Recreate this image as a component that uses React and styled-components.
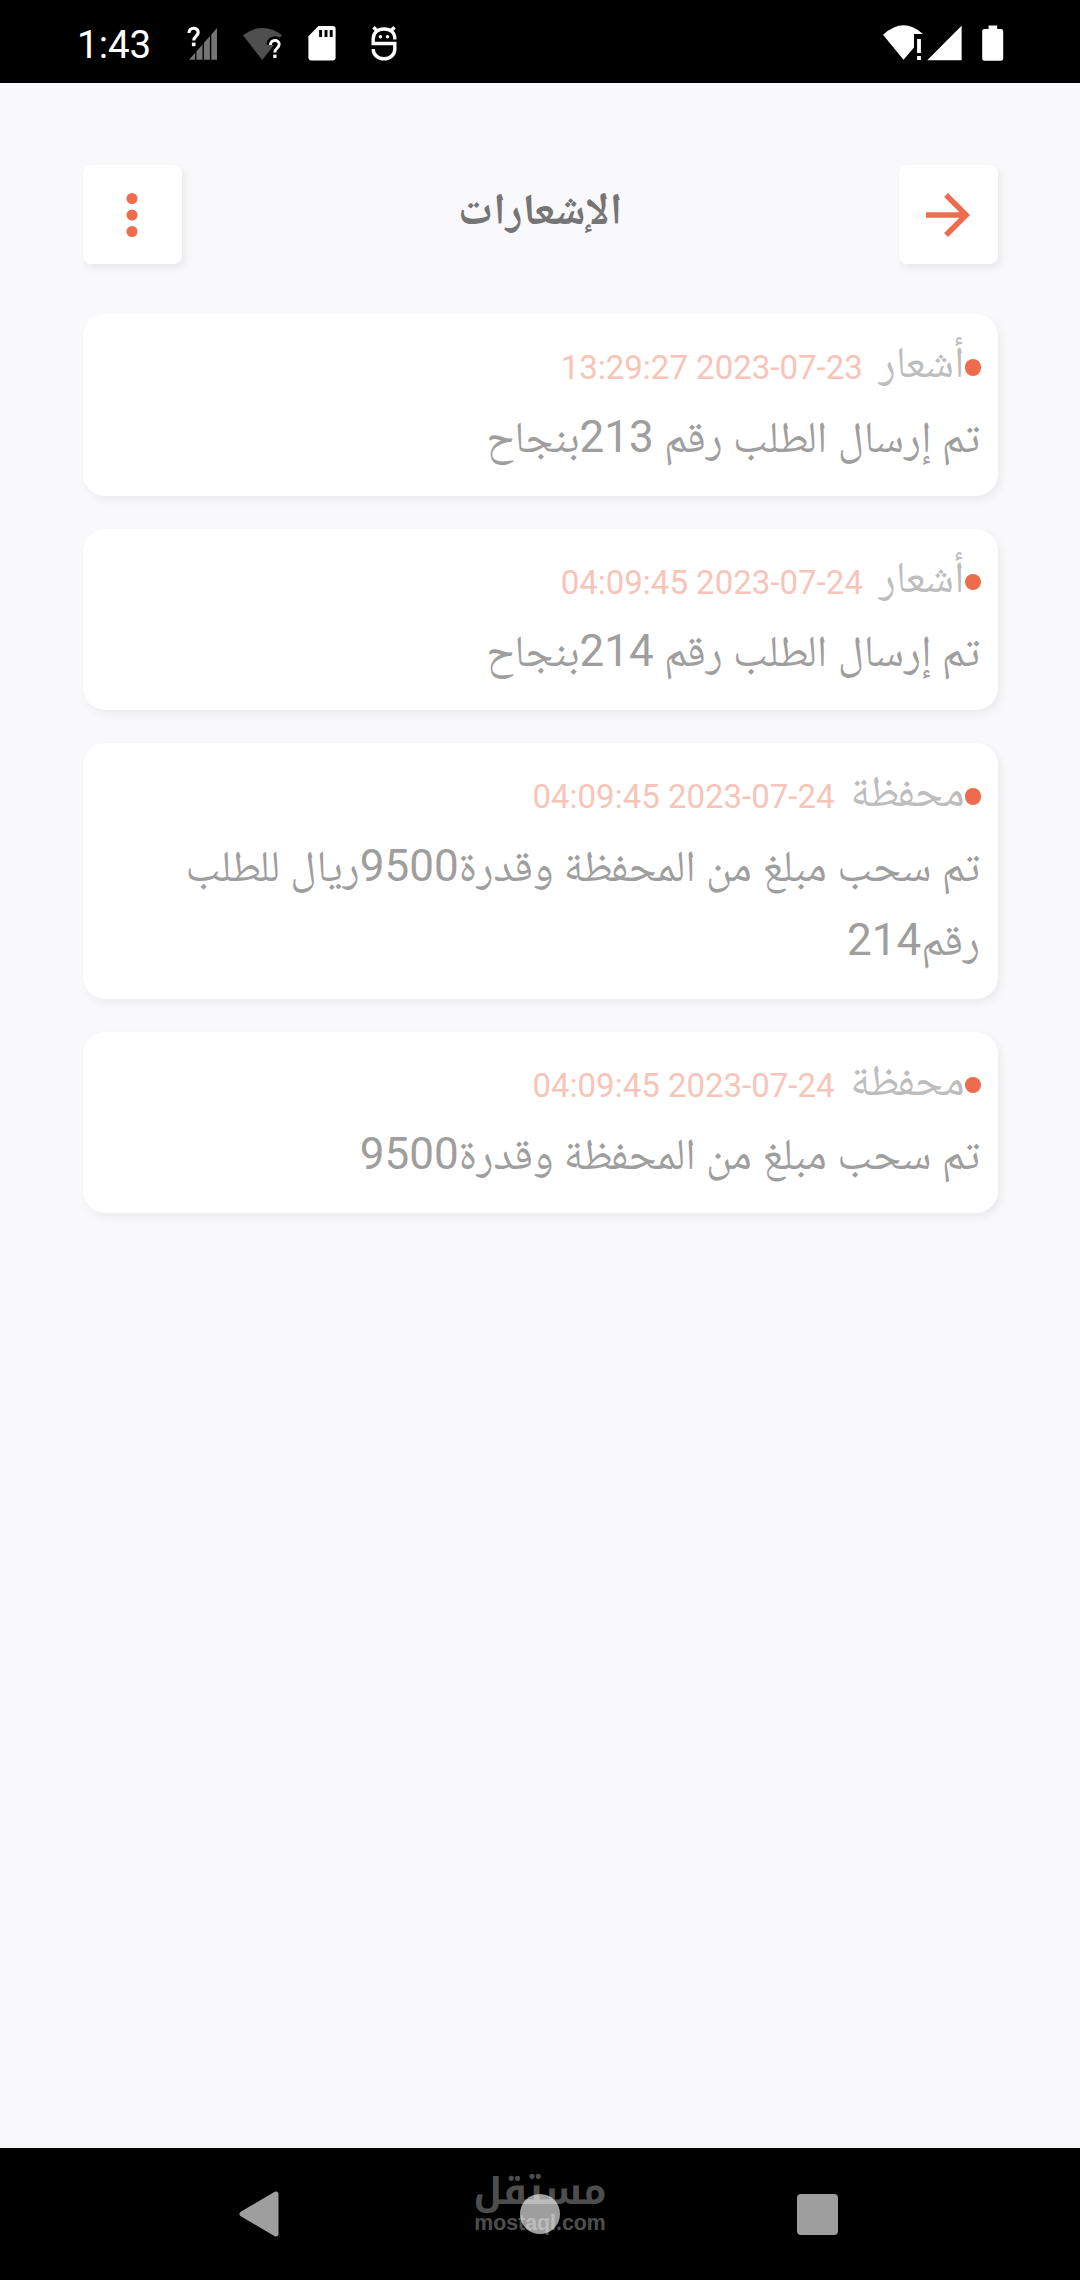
import React from "react";
import styled, { createGlobalStyle } from "styled-components";

const notifications = [
  { id: 1, type: "أشعار", date: "2023-07-23 13:29:27", body: "تم إرسال الطلب رقم 213بنجاح" },
  { id: 2, type: "أشعار", date: "2023-07-24 04:09:45", body: "تم إرسال الطلب رقم 214بنجاح" },
  { id: 3, type: "محفظة", date: "2023-07-24 04:09:45", body: "تم سحب مبلغ من المحفظة وقدرة9500ريال للطلب رقم214" },
  { id: 4, type: "محفظة", date: "2023-07-24 04:09:45", body: "تم سحب مبلغ من المحفظة وقدرة9500" },
];

const App = () => {
  return (
    <StScreen>
      <GlobalStyle />
      <StatusBar />
      <StMain>
        <StHeader>
          <StIconButton aria-label="رجوع">
            <svg width="66" height="66" viewBox="0 0 24 24" fill="currentColor">
              <path d="M12 4l-1.41 1.41L16.17 11H4v2h12.17l-5.58 5.59L12 20l8-8z" />
            </svg>
          </StIconButton>
          <StTitle>الإشعارات</StTitle>
          <StIconButton aria-label="المزيد">
            <svg width="66" height="66" viewBox="0 0 24 24" fill="currentColor">
              <circle cx="12" cy="6" r="2" />
              <circle cx="12" cy="12" r="2" />
              <circle cx="12" cy="18" r="2" />
            </svg>
          </StIconButton>
        </StHeader>
        <StList>
          {notifications.map((item) => (
            <NotificationCard key={item.id} item={item} />
          ))}
        </StList>
      </StMain>
      <NavigationBar />
    </StScreen>
  );
};

export default App;

const NotificationCard = ({ item }) => {
  const [day, time] = item.date.split(" ");
  return (
    <StCard>
      <StCardTop>
        <StDot />
        <StType>{item.type}</StType>
        <StDate>{`${time} ${day}`}</StDate>
      </StCardTop>
      <StBody>{item.body}</StBody>
    </StCard>
  );
};

const StatusBar = () => {
  return (
    <StStatusBar>
      <StClock>1:43</StClock>
      <StStatusIcons $gap="24px">
        {/* mobile signal, unknown */}
        <svg width="32" height="36" viewBox="0 0 32 36">
          <path d="M3 34.7L31 3V34.7Z" fill="#757575" />
          <path d="M9.7 20V35M17.2 15V35M24.6 8V35" stroke="#000" strokeWidth="1.4" />
          <path d="M3.3 8C3.3 1.4 12.6 1.6 12.6 7.4C12.6 11.2 8 11.4 8 16" fill="none" stroke="#000" strokeWidth="8" />
          <path d="M3 8C3 1.7 12.2 1.9 12.2 7.2C12.2 11 7.7 11.2 7.7 15.6" fill="none" stroke="#fff" strokeWidth="3.2" />
          <rect x="5.9" y="17.6" width="3.6" height="3.6" fill="#fff" />
        </svg>
        {/* wifi, unknown */}
        <svg width="42" height="36" viewBox="0 0 42 36">
          <path d="M1 10.3Q20.5 -4.3 40 10L20.2 34.9Z" fill="#4f4f4f" />
          <path d="M28.3 20C28.3 13.6 37.4 13.8 37.4 19.2C37.4 23 32.9 23.2 32.9 28V33" fill="none" stroke="#000" strokeWidth="8" />
          <path d="M28.4 20C28.4 14 37.2 14.2 37.2 19.2C37.2 22.8 32.8 23.2 32.8 27.6" fill="none" stroke="#fff" strokeWidth="2.9" />
          <rect x="31.2" y="29.6" width="3.3" height="3.3" fill="#fff" />
        </svg>
        {/* sd card */}
        <svg width="28" height="36" viewBox="0 0 28 36">
          <path d="M10.4 1H24.6Q27.6 1 27.6 4V32.5Q27.6 35.5 24.6 35.5H3.4Q.4 35.5 .4 32.5V11.2Z" fill="#fff" />
          <path d="M12.6 5V12M18 5V12M23.2 5V12" stroke="#000" strokeWidth="2.9" />
        </svg>
      </StStatusIcons>
      <StDebugIcon width="26" height="36" viewBox="0 0 26 36">
        <g fill="none" stroke="#fff" strokeWidth="3.4">
          <path d="M23.8 14.5C24.2 7 19 4 13 4C7 4 2.2 7.5 2.2 14V18.5H23.8V24C23.8 30 19 33.8 13 33.8C7 33.8 2.2 30 2.2 24" />
          <path d="M2.5 2.3L6.5 6.3M23.5 2.3L19.5 6.3" />
        </g>
        <circle cx="9.5" cy="11.7" r="1.8" fill="#fff" />
        <circle cx="16.5" cy="11.7" r="1.8" fill="#fff" />
      </StDebugIcon>
      <StStatusIcons $gap="4px" $end>
        {/* wifi, no internet */}
        <svg width="40" height="36" viewBox="0 0 40 36">
          <path d="M0 9.7Q20.5 -9 40 9H31V22.5L20.5 34.7Z" fill="#fff" />
          <path d="M36 14V28M36 31V35" stroke="#fff" strokeWidth="3.8" />
        </svg>
        <svg width="35" height="36" viewBox="0 0 35 36">
          <path d="M.2 35.2L34.6 .8V35.2Z" fill="#fff" />
        </svg>
        <StBattery width="22" height="36" viewBox="0 0 22 36">
          <path d="M6.6 .6H15.2V4H19Q21.2 4 21.2 6.2V33.6Q21.2 35.8 19 35.8H2.4Q.2 35.8 .2 33.6V6.2Q.2 4 2.4 4H6.6Z" fill="#fff" />
        </StBattery>
      </StStatusIcons>
    </StStatusBar>
  );
};

const NavigationBar = () => {
  return (
    <StNavBar>
      <svg width="42" height="48" viewBox="0 0 42 48">
        <path d="M38 4V44L4 24Z" fill="#9e9e9e" stroke="#9e9e9e" strokeWidth="5" strokeLinejoin="round" />
      </svg>
      <StHomeKey />
      <StRecentKey />
      <StWatermark>
        <StWatermarkName>مستقل</StWatermarkName>
        <StWatermarkSite>mostaql.com</StWatermarkSite>
      </StWatermark>
    </StNavBar>
  );
};

const GlobalStyle = createGlobalStyle`
  * {
    box-sizing: border-box;
  }

  body {
    margin: 0;
    background-color: #f9f9fb;
    font-family: Roboto, "Noto Naskh Arabic", "DejaVu Sans", sans-serif;
  }

  svg {
    display: block;
    flex-shrink: 0;
  }
`;

const StScreen = styled.div`
  display: flex;
  flex-direction: column;
  width: 1080px;
  height: 2280px;
  background-color: #f9f9fb;
`;

const StStatusBar = styled.div`
  display: flex;
  align-items: center;
  height: 83px;
  padding: 3px 76px 0 77px;
  background-color: #000;
`;

const StClock = styled.span`
  width: 109px;
  margin-top: 3px;
  font-size: 38.5px;
  line-height: 45px;
  color: #fff;
`;

const StStatusIcons = styled.div`
  display: flex;
  align-items: center;
  gap: ${({ $gap }) => $gap};
  margin-left: ${({ $end }) => ($end ? "auto" : "0")};
`;

const StDebugIcon = styled.svg`
  margin-left: 35px;
`;

const StBattery = styled.svg`
  margin-left: 16px;
`;

const StMain = styled.main`
  flex: 1;
  padding: 82px 82.5px 0;
  direction: rtl;
`;

const StHeader = styled.header`
  display: flex;
  align-items: center;
  justify-content: space-between;
  height: 99px;
`;

const StTitle = styled.h1`
  margin: 0 0 11px;
  font-size: 44px;
  font-weight: 700;
  line-height: 74px;
  color: #757575;
`;

const StIconButton = styled.button`
  display: flex;
  align-items: center;
  justify-content: center;
  width: 99px;
  height: 99px;
  padding: 0;
  border: none;
  border-radius: 8px;
  background-color: #fff;
  box-shadow: 3px 4px 9px rgba(0, 0, 0, 0.07);
  color: #ee6c4d;
`;

const StList = styled.div`
  display: flex;
  flex-direction: column;
  gap: 33px;
  margin-top: 50px;
`;

const StCard = styled.article`
  padding: 11px 16.5px 22px;
  border-radius: 22px;
  background-color: #fff;
  box-shadow: 3px 4px 9px rgba(0, 0, 0, 0.06);
`;

const StCardTop = styled.div`
  display: flex;
  align-items: center;
  height: 74.5px;
`;

const StDot = styled.span`
  width: 16.5px;
  height: 16.5px;
  margin-top: 10px;
  border-radius: 50%;
  background-color: #ee6c4d;
`;

const StType = styled.span`
  font-size: 44px;
  line-height: 74px;
  color: #bdbdbd;
`;

const StDate = styled.time`
  margin: 12px 16px 0 0;
  font-size: 33px;
  line-height: 40px;
  color: #f8c4b8;
  direction: ltr;
`;

const StBody = styled.p`
  margin: 0;
  padding-right: 1px;
  font-size: 44px;
  line-height: 74px;
  word-spacing: -0.6px;
  color: #9e9e9e;
`;

const StNavBar = styled.nav`
  position: relative;
  display: flex;
  align-items: center;
  justify-content: space-between;
  height: 132px;
  padding: 0 242px 0 238px;
  background-color: #000;
`;

const StHomeKey = styled.span`
  width: 40px;
  height: 40px;
  margin-left: 3px;
  border-radius: 50%;
  background-color: #9e9e9e;
`;

const StRecentKey = styled.span`
  width: 41px;
  height: 41px;
  border-radius: 4px;
  background-color: #9e9e9e;
`;

const StWatermark = styled.div`
  position: absolute;
  top: 24px;
  left: 50%;
  display: flex;
  flex-direction: column;
  align-items: center;
  transform: translateX(-50%);
  color: #fff;
  opacity: 0.3;
`;

const StWatermarkName = styled.span`
  font-family: "Noto Kufi Arabic", "DejaVu Sans", sans-serif;
  font-size: 37px;
  font-weight: 700;
  line-height: 40px;
`;

const StWatermarkSite = styled.span`
  font-family: "Liberation Sans", sans-serif;
  font-size: 21.3px;
  font-weight: 700;
  line-height: 22px;
`;
